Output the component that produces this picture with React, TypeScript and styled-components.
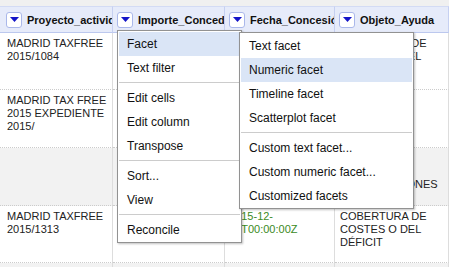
import { createGlobalStyle, styled } from "styled-components";

const GlobalStyle = createGlobalStyle`
    html, body {
        margin: 0;
        padding: 0;
        background: #ffffff;
    }
    body {
        font-family: "Liberation Sans", Arial, sans-serif;
        color: #111;
    }
`;

type Row = {
    height: number;
    shade: boolean;
    cells: string[];
};

const columns = ["Proyecto_actividad", "Importe_Concedido", "Fecha_Concesión", "Objeto_Ayuda"];

// cells hidden under the open menus are left empty
const rows: Row[] = [
    {
        height: 57,
        shade: false,
        cells: ["MADRID TAXFREE\n2015/1084", "", "", "COBERTURA DE\nCOSTES O DEL\nDÉFICIT"],
    },
    {
        height: 58,
        shade: false,
        cells: ["MADRID TAX FREE\n2015 EXPEDIENTE\n2015/", "", "", ""],
    },
    {
        height: 58,
        shade: true,
        cells: ["", "", "", "\n\nY SUBVENCIONES"],
    },
    {
        height: 57,
        shade: false,
        cells: ["MADRID TAXFREE\n2015/1313", "", "2015-12-\n15T00:00:00Z", "COBERTURA DE\nCOSTES O DEL\nDÉFICIT"],
    },
    {
        height: 20,
        shade: true,
        cells: ["", "", "", ""],
    },
];

const columnMenu = [
    ["Facet", "Text filter"],
    ["Edit cells", "Edit column", "Transpose"],
    ["Sort...", "View"],
    ["Reconcile"],
];

const facetMenu = [
    ["Text facet", "Numeric facet", "Timeline facet", "Scatterplot facet"],
    ["Custom text facet...", "Custom numeric facet...", "Customized facets"],
];

function DropButton() {
    return (
        <Drop>
            <svg width="9" height="5" viewBox="0 0 9 5">
                <path d="M0 0 H9 L4.5 5 Z" fill="#1515c8" />
            </svg>
        </Drop>
    );
}

function Menu({ groups, active, left, width, top }: { groups: string[][]; active: string; left: number; width: number; top: number }) {
    return (
        <MenuBox style={{ left, width, top }}>
            {groups.map((group, i) => (
                <div key={i}>
                    {i > 0 && <MenuSeparator />}
                    {group.map((item) => (
                        <MenuItem key={item} $active={item === active}>
                            {item}
                        </MenuItem>
                    ))}
                </div>
            ))}
        </MenuBox>
    );
}

export default function App() {
    return (
        <Page>
            <GlobalStyle />
            <TopStrip />
            <Grid>
                {columns.map((name) => (
                    <HeaderCell key={name}>
                        <DropButton />
                        <HeaderLabel>{name}</HeaderLabel>
                    </HeaderCell>
                ))}
                {rows.map((row, r) =>
                    row.cells.map((text, c) => (
                        <Cell key={`${r}-${c}`} $shade={row.shade} $date={c === 2} style={{ height: row.height }}>
                            {text}
                        </Cell>
                    ))
                )}
            </Grid>
            <Menu groups={columnMenu} active="Facet" left={117} width={125} top={30} />
            <Menu groups={facetMenu} active="Numeric facet" left={239} width={175} top={32} />
        </Page>
    );
}

const Page = styled.div`
    position: relative;
    width: 449px;
    height: 267px;
    overflow: hidden;
    background: #ffffff;
`;

const TopStrip = styled.div`
    height: 6px;
    background: #f0f0f0;
`;

const Grid = styled.div`
    display: grid;
    grid-template-columns: 113px 112px 110px 114px;
`;

const HeaderCell = styled.div`
    display: flex;
    align-items: center;
    gap: 5px;
    height: 27px;
    padding-left: 4px;
    background: #e6ebfa;
    border-top: 1px solid #d3dbf4;
    border-bottom: 1px solid #bcc8ee;
    border-right: 1px solid #c6d0f1;
    overflow: hidden;
    white-space: nowrap;
    box-sizing: border-box;

    &:first-child {
        padding-left: 6px;
    }
`;

const Drop = styled.span`
    flex: none;
    display: flex;
    align-items: center;
    justify-content: center;
    width: 16px;
    height: 16px;
    box-sizing: border-box;
    background: #ffffff;
    border: 1px solid #aab8ea;
    border-radius: 3px;
`;

const HeaderLabel = styled.span`
    font-size: 11px;
    font-weight: bold;
    color: #111;
`;

const Cell = styled.div<{ $shade: boolean; $date: boolean }>`
    box-sizing: border-box;
    padding: 4px 4px 0 ${(p) => (p.$date ? "4px" : "5px")};
    font-size: 11px;
    line-height: 13px;
    white-space: pre-line;
    overflow: hidden;
    color: ${(p) => (p.$date ? "#3b8a1e" : "#222")};
    background: ${(p) => (p.$shade ? "#f2f2f2" : "#ffffff")};
    border-right: 1px solid #dddddd;
    border-bottom: 1px dotted #cccccc;

    &:nth-child(4n + 1) {
        padding-left: 7px;
    }
`;

const MenuBox = styled.div`
    position: absolute;
    box-sizing: border-box;
    padding: 1px 1px 0 1px;
    background: #ffffff;
    border: 1px solid #929292;
    box-shadow: 1px 1px 2px rgba(0, 0, 0, 0.25);
`;

const MenuItem = styled.div<{ $active: boolean }>`
    height: 24px;
    line-height: 24px;
    padding-left: 8px;
    font-size: 12px;
    color: #111;
    white-space: nowrap;
    background: ${(p) => (p.$active ? "#dae5f6" : "transparent")};
`;

const MenuSeparator = styled.div`
    height: 1px;
    margin: 2px 0 3px 0;
    background: #cccccc;
`;
